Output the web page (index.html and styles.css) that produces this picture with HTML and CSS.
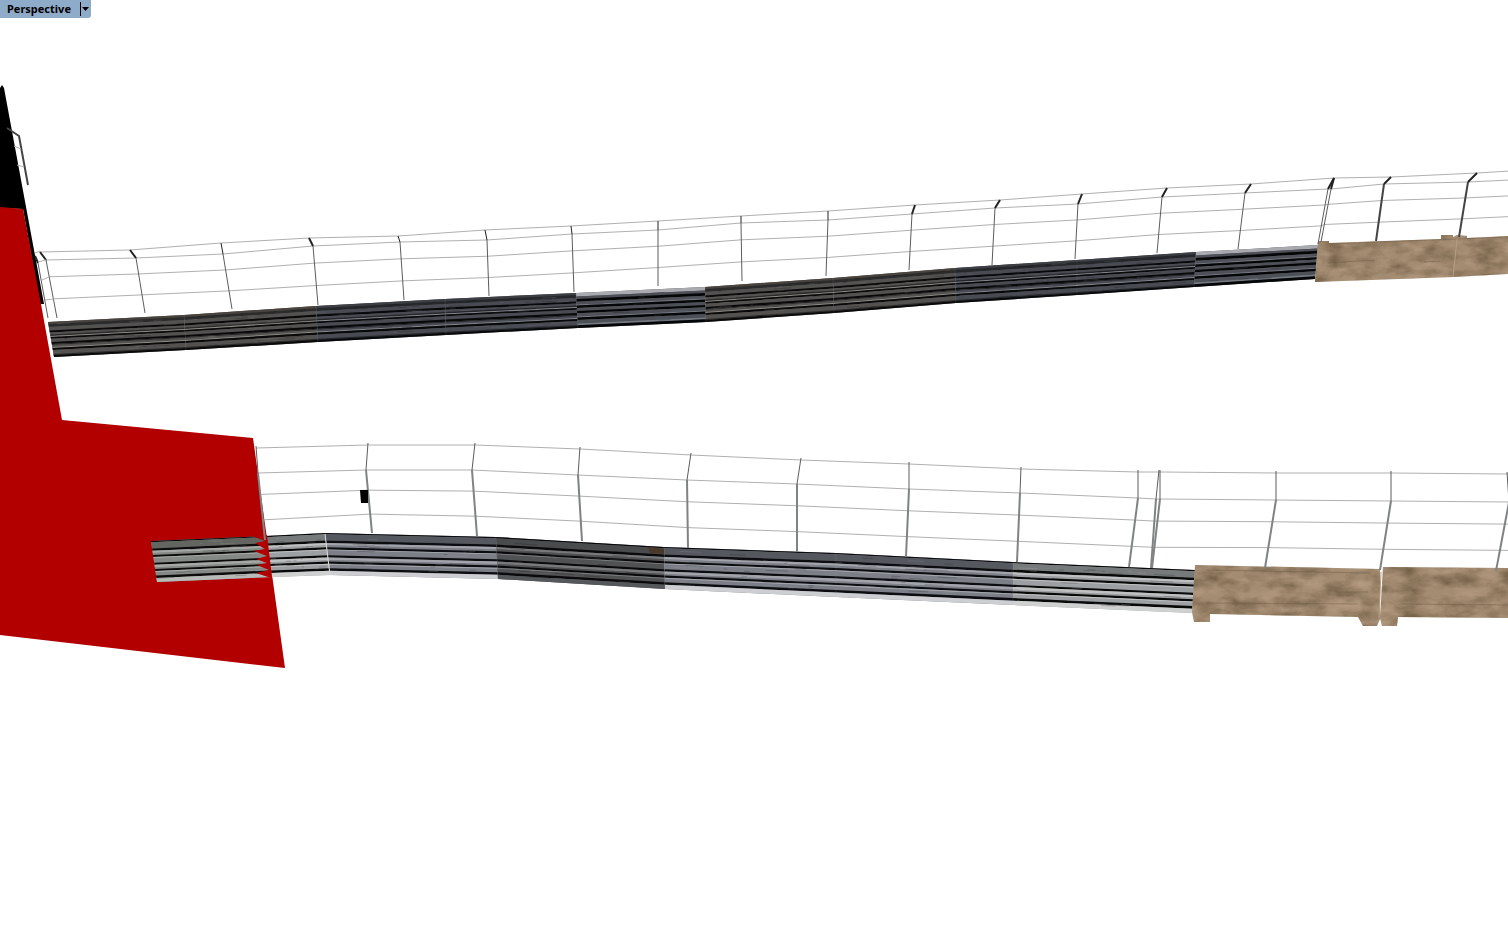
FILE: index.html
```
<!DOCTYPE html>
<html lang="en">
<head>
    <meta charset="UTF-8">
    <meta name="viewport" content="width=device-width, initial-scale=1.0">
    <title>Perspective</title>
    <link rel="stylesheet" href="styles.css">
</head>
<body>
    <main class="viewport">
        <svg class="scene" viewBox="0 0 1508 949" preserveAspectRatio="xMinYMin slice" role="img" aria-label="Guard rails and fences">
            <defs>
                <filter id="concrete" x="0" y="0" width="100%" height="100%" color-interpolation-filters="sRGB">
                    <feTurbulence type="fractalNoise" baseFrequency="0.04 0.08" numOctaves="6" seed="8" result="noise"/>
                    <feColorMatrix in="noise" type="matrix" values="0 0 0 0 0.36  0 0 0 0 0.29  0 0 0 0 0.19  1.3 0 0 0 -0.45" result="stain"/>
                    <feColorMatrix in="noise" type="matrix" values="0 0 0 0 0.76  0 0 0 0 0.66  0 0 0 0 0.56  0 1.2 0 0 -0.5" result="chalk"/>
                    <feMerge result="marks">
                        <feMergeNode in="stain"/>
                        <feMergeNode in="chalk"/>
                    </feMerge>
                    <feComposite in="marks" in2="SourceGraphic" operator="in" result="cut"/>
                    <feMerge>
                        <feMergeNode in="SourceGraphic"/>
                        <feMergeNode in="cut"/>
                    </feMerge>
                </filter>
            </defs>

            <!-- end wall -->
            <polygon class="black" points="0,88 2,85 4,88 44,304 40,304 23,209 0,208"/>
            <polygon class="red" points="0,207 23,209 41,304 62,420 253,438 285,668 0,635"/>
            <polyline class="post dark" points="7,128 19,136 28,185"/>
            <path class="wire" d="M14,146 L21,149 M17,165 L24,167"/>

            <g id="rails"></g>

            <!-- red teeth where the lower rail enters the wall -->
            <polygon class="red" points="252,536 265,541 255,543 265,549 254,551 267,556 256,559 267,563 257,565 269,570 256,573 268,577 272,577 267,535"/>

            <g filter="url(#concrete)">
                <polygon class="concrete" points="1318,241 1329,241 1329,243 1441,239 1441,235 1453,235 1453,237 1457,235 1467,236 1467,238 1508,236 1508,274 1454,277 1315,282"/>
                <polygon class="concrete" points="1195,565 1380,569 1380,619 1377,626 1363,626 1358,617 1210,614 1210,622 1194,622 1192,612"/>
                <polygon class="concrete" points="1383,567 1508,568 1508,618 1398,617 1397,626 1382,626 1380,618"/>
            </g>
            <path class="groove" d="M1330,244 L1508,237 M1328,263 L1375,260 M1424,262 L1440,261 M1206,603 L1358,604 M1402,604 L1508,605 M1206,570 L1370,573 M1345,592 L1368,592"/>
            <path class="seam" d="M1457,239 L1453,277 M1381,572 L1379,618"/>

            <g id="fences"></g>
            <polygon class="black" points="360,490 368,490 368,503 361,503"/>
        </svg>

        <div class="tab">
            <button type="button" class="tab-name">Perspective</button>
            <button type="button" class="tab-menu" aria-label="Viewport menu">
                <svg width="7" height="4" viewBox="0 0 7 4"><path d="M0,0 H7 L3.5,4 Z"/></svg>
            </button>
        </div>
    </main>
    <script src="scene.js"></script>
</body>
</html>
```
FILE: styles.css
```
body { margin: 0; background-color: #fff; font-family: "Noto Sans", "Open Sans", sans-serif; }
.viewport { position: relative; height: 100vh; overflow: hidden; }
.scene { display: block; width: 100%; height: 100%; }

.tab { position: absolute; top: 0; left: 0; display: flex; height: 18px; background-color: #8fabca; border-bottom-right-radius: 3px; overflow: hidden; }
.tab button { margin: 0; border: none; background: none; color: #000; cursor: pointer; }
.tab-name { padding: 0 9px 0 7px; font-family: inherit; font-size: 11px; font-weight: bold; line-height: 18px; }
.tab .tab-menu { display: flex; align-items: center; padding: 0 2px 0 1px; margin: 2px 0; border-left: 1px solid #000; }

.black { fill: #000; }
.red { fill: #b20000; }
.concrete { fill: #a48c72; }
.groove { fill: none; stroke: #6f5d48; stroke-opacity: 0.5; }
.seam { fill: none; stroke: #b59e84; stroke-width: 1; }
.wire { fill: none; stroke: #b0b0b0; stroke-width: 1; }
.post { fill: none; stroke: #808383; stroke-width: 2; }
.post.thin { stroke: #5c5c5c; stroke-width: 1; }
.post.dark { stroke: #444; }
.post.arm { stroke: #222; stroke-width: 2; }
.post.stub { stroke: #222; stroke-width: 1; }
```
FILE: scene.js
```
const SVG = 'http://www.w3.org/2000/svg';

function add(parent, name, attrs) {
    const el = document.createElementNS(SVG, name);
    for (const key in attrs) el.setAttribute(key, attrs[key]);
    parent.appendChild(el);
}

let seed = 7;
function random() {
    seed = (seed * 16807) % 2147483647;
    return seed / 2147483647;
}

// where each fold of the rail starts, from its top (0) to its bottom (1)
const upperFolds = [
    [0, 'edge'], [0.06, 'dark'], [0.14, 'base'], [0.24, 'black'],
    [0.30, 'base'], [0.36, 'dark'], [0.40, 'light'], [0.43, 'black'], [0.48, 'base'],
    [0.57, 'black'], [0.63, 'dark'], [0.66, 'base'], [0.71, 'light'], [0.74, 'black'],
    [0.80, 'base'], [0.91, 'dark'], [0.94, 'black']
];
// zinc-bright sections have a broad pale top edge and clean folds
const brightFolds = [
    [0, 'edge'], [0.10, 'base'], [0.17, 'black'], [0.25, 'base'], [0.33, 'light'], [0.36, 'black'],
    [0.43, 'base'], [0.51, 'black'], [0.58, 'base'], [0.67, 'light'], [0.70, 'black'],
    [0.77, 'base'], [0.87, 'light'], [0.92, 'black']
];
const lowerFolds = [
    [0, 'black'], [0.03, 'edge'], [0.18, 'black'], [0.24, 'light'], [0.29, 'base'], [0.34, 'black'],
    [0.39, 'light'], [0.42, 'base'], [0.53, 'black'], [0.58, 'light'], [0.64, 'base'], [0.68, 'black'],
    [0.73, 'light'], [0.76, 'base'], [0.84, 'black'], [0.90, 'foot']
];

const brown = { edge: '#4a443e', base: '#545250', dark: '#2b2b2b', light: '#8d8a85', black: '#0a0a0a' };
const slate = { edge: '#3c3f43', base: '#484b52', dark: '#25272b', light: '#84888e', black: '#08090b' };
const bright = { edge: '#a9aaaf', base: '#4d5056', dark: '#2b2e33', light: '#757982', black: '#050608' };
const green = { edge: '#626560', base: '#858985', light: '#a5a8a4', black: '#0c0c0c', foot: '#b7bab7' };
const steel = { edge: '#55585e', base: '#7c7f87', light: '#a2a4ab', black: '#0c0d10', foot: '#cdced2' };
const worn = { edge: '#4a4b4d', base: '#515254', light: '#77797b', black: '#0a0a0c', foot: '#55585b' };
const pale = { edge: '#777a7a', base: '#9da0a2', light: '#bec0c1', black: '#080909', foot: '#cfd1d1' };

// joints: top x, top y, bottom x, bottom y, colours of the section to the right
const upperRail = [
    [48, 322, 54, 357, brown], [184, 315, 186, 350, brown], [316, 306, 318, 342, slate],
    [445, 299, 446, 335, slate], [576, 293, 578, 328, bright], [705, 287, 706, 322, brown],
    [833, 278, 834, 313, brown], [955, 268, 956, 303, slate], [1077, 260, 1077, 295, slate],
    [1196, 252, 1194, 287, bright], [1318, 245, 1315, 279]
];
const lowerRail = [
    [151, 541, 157, 582, green], [265, 536, 272, 577, pale], [325, 533, 330, 575, steel],
    [496, 537, 498, 579, worn], [664, 547, 665, 589, steel], [836, 553, 836, 597, steel],
    [1013, 562, 1013, 605, pale], [1195, 570, 1192, 613]
];

const rails = document.getElementById('rails');

function drawRail(joints, usualFolds) {
    for (let i = 0; i < joints.length - 1; i++) {
        const a = joints[i], b = joints[i + 1], colors = a[4];
        const folds = colors === bright ? brightFolds : usualFolds;
        const at = (t, f) => {
            const x1 = a[0] + (a[2] - a[0]) * f, y1 = a[1] + (a[3] - a[1]) * f;
            const x2 = b[0] + (b[2] - b[0]) * f, y2 = b[1] + (b[3] - b[1]) * f;
            return (x1 + (x2 - x1) * t).toFixed(1) + ',' + (y1 + (y2 - y1) * t).toFixed(1);
        };
        add(rails, 'polygon', { points: [at(0, 0), at(1, 0), at(1, 1), at(0, 1)].join(' '), fill: colors.base });
        folds.forEach(([from, name], n) => {
            const to = n + 1 < folds.length ? folds[n + 1][0] : 1;
            add(rails, 'polygon', { points: [at(0, from), at(1, from), at(1, to), at(0, to)].join(' '), fill: colors[name] });
        });
        // scratches along the metal
        for (let n = 0; n < 30; n++) {
            const t = random() * 0.85, f = 0.06 + random() * 0.88;
            add(rails, 'polyline', {
                points: at(t, f) + ' ' + at(t + 0.02 + random() * 0.12, f),
                stroke: random() < 0.5 ? colors.light : colors.black,
                'stroke-opacity': 0.2
            });
        }
        if (i > 0) add(rails, 'polyline', { points: at(0, 0) + ' ' + at(0, 1), stroke: colors.light, 'stroke-opacity': 0.15 });
    }
}

drawRail(upperRail, upperFolds);
drawRail(lowerRail, lowerFolds);
add(rails, 'polyline', { points: '325,534 330,575', stroke: '#ddd' });
add(rails, 'polygon', { points: '648,547 664,549 664,554 650,553', fill: '#4a3520', 'fill-opacity': 0.8 });

// posts: tip, elbow, foot
const upperPosts = [
    [40, 252, 46, 260, 57, 318], [130, 250, 136, 258, 145, 313], [221, 243, 223, 254, 232, 309],
    [309, 238, 313, 246, 318, 305], [398, 236, 400, 242, 404, 300], [485, 230, 487, 240, 489, 296],
    [571, 226, 572, 234, 574, 292], [658, 221, 658, 230, 658, 286], [741, 216, 741, 223, 742, 281],
    [828, 211, 828, 220, 826, 276], [915, 205, 912, 214, 909, 270], [1000, 200, 995, 208, 992, 265],
    [1082, 194, 1078, 204, 1075, 259], [1167, 188, 1162, 197, 1157, 253], [1251, 184, 1245, 193, 1238, 249],
    [1334, 178, 1328, 189, 1318, 244], [1334, 178, 1331, 189, 1321, 242], [1391, 177, 1384, 184, 1376, 241],
    [1477, 173, 1468, 182, 1459, 237], [1560, 168, 1552, 178, 1543, 233]
];
const lowerPosts = [
    [256, 446, 258, 473, 265, 540], [368, 443, 366, 470, 372, 533], [475, 443, 472, 470, 477, 536],
    [580, 447, 578, 475, 582, 541], [691, 453, 687, 480, 688, 548], [801, 458, 797, 484, 797, 552],
    [909, 462, 909, 489, 906, 557], [1021, 467, 1020, 493, 1017, 562], [1138, 470, 1138, 498, 1129, 567],
    [1159, 470, 1156, 499, 1151, 568], [1160, 470, 1160, 499, 1152, 568], [1276, 471, 1276, 500, 1265, 568],
    [1391, 471, 1391, 501, 1380, 570], [1507, 472, 1509, 502, 1496, 571], [1622, 473, 1624, 503, 1610, 573]
];

const fences = document.getElementById('fences');

function drawFence(posts, drop, heights, isUpper) {
    const line = place => add(fences, 'polyline', { class: 'wire', points: posts.map(place).join(' ') });
    line(p => p[0] + ',' + (p[1] + drop));
    heights.forEach(h => line(p => (p[2] + (p[4] - p[2]) * h) + ',' + (p[3] + (p[5] - p[3]) * h)));
    posts.forEach(p => {
        const leaning = Math.abs(p[0] - p[2]) > 2;
        let look = 'post';
        if (isUpper) look = p[0] > 1340 ? 'post dark' : 'post thin';
        add(fences, 'polyline', { class: look, points: `${p[2]},${p[3]} ${p[4]},${p[5]}` });
        let arm = 'post thin';
        if (isUpper) arm = leaning ? 'post arm' : 'post stub';
        add(fences, 'polyline', { class: arm, points: `${p[0]},${p[1]} ${p[2]},${p[3]}` });
    });
}

drawFence(upperPosts, 0, [0, 0.29, 0.67], true);
drawFence(lowerPosts, 2, [0, 0.32, 0.7], false);

// fence corner behind the wall
add(fences, 'polyline', { class: 'post arm', points: '35,256 38,263' });
add(fences, 'polyline', { class: 'post thin', points: '38,263 48,318' });
add(fences, 'path', { class: 'wire', d: 'M35,253 L40,251 M38,262 L46,260 M42,280 L49,277 M45,300 L54,299' });
```
